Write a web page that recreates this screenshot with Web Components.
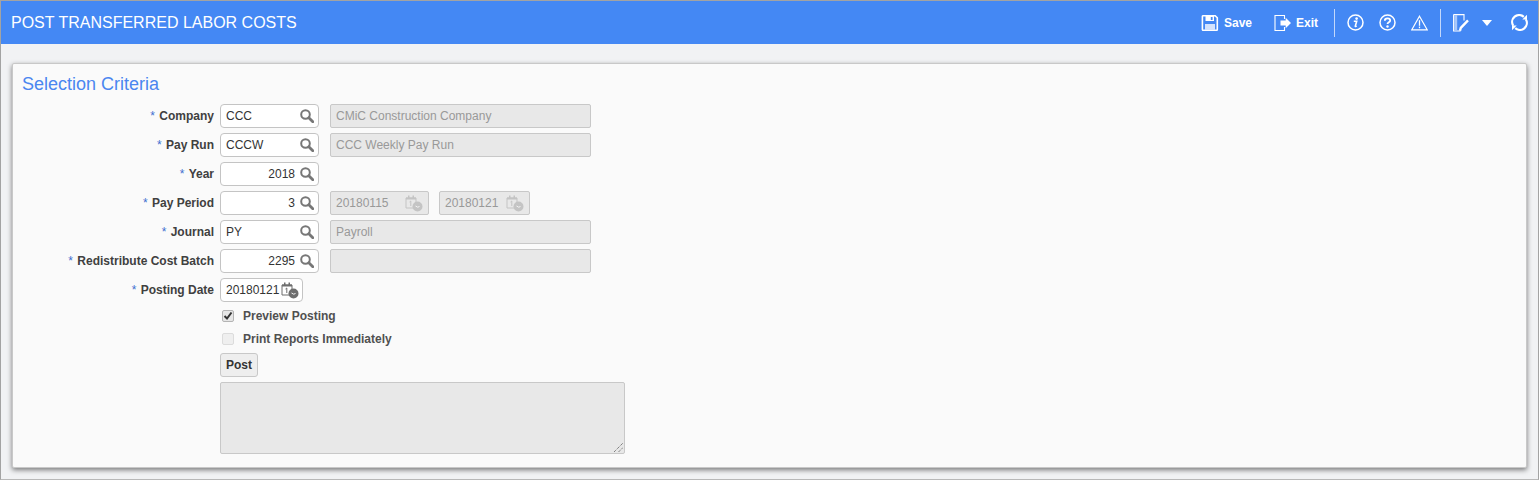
<!DOCTYPE html>
<html>
<head>
<meta charset="utf-8">
<title>Post Transferred Labor Costs</title>
<style>
  html, body { margin: 0; height: 100%; }
  body { font-family: "Liberation Sans", Arial, sans-serif; overflow: hidden; }
</style>
</head>
<body>
<app-shell>
  <title-bar slot="bar" heading="POST TRANSFERRED LABOR COSTS"></title-bar>
  <form-panel heading="Selection Criteria">
    <form-row label="Company" required>
      <lov-input value="CCC"></lov-input>
      <text-box value="CMiC Construction Company" disabled></text-box>
    </form-row>
    <form-row label="Pay Run" required>
      <lov-input value="CCCW"></lov-input>
      <text-box value="CCC Weekly Pay Run" disabled></text-box>
    </form-row>
    <form-row label="Year" required>
      <lov-input value="2018" numeric></lov-input>
    </form-row>
    <form-row label="Pay Period" required>
      <lov-input value="3" numeric></lov-input>
      <date-box value="20180115" width="99" disabled></date-box>
      <date-box value="20180121" width="91" disabled style="margin-left:-1px"></date-box>
    </form-row>
    <form-row label="Journal" required>
      <lov-input value="PY"></lov-input>
      <text-box value="Payroll" disabled></text-box>
    </form-row>
    <form-row label="Redistribute Cost Batch" required>
      <lov-input value="2295" numeric></lov-input>
      <text-box value="" disabled></text-box>
    </form-row>
    <form-row label="Posting Date" required>
      <date-box value="20180121" width="83"></date-box>
    </form-row>
    <check-row label="Preview Posting" checked style="margin-top:-3px"></check-row>
    <check-row label="Print Reports Immediately" disabled></check-row>
    <post-button style="margin-top:3px">Post</post-button>
    <log-area style="margin-top:5px"></log-area>
  </form-panel>
</app-shell>

<script>
const ICONS = {
  save: `<svg width="18" height="18" viewBox="0 0 18 18"><path d="M2.200 1.700h12l2.100 2.100v11.700a.8.8 0 0 1-.8.8H2.200a.8.8 0 0 1-.8-.8V2.500a.8.8 0 0 1 .8-.8z" fill="none" stroke="#fff" stroke-width="1.600"/><path d="M4.500 2h8.500v5H4.500z" fill="#fff"/><path d="M9.800 3h1.800v3H9.800z" fill="#4488f4"/><path d="M4 10h10v6H4z" fill="#d4e3fd"/></svg>`,
  exit: `<svg width="18" height="18" viewBox="0 0 18 18"><path d="M10.500 5V1.500h-9.500v15h9.500V13" fill="none" stroke="#fff" stroke-width="1.100"/><path d="M6.500 6.500h5.200V3.800L17 9l-5.300 5.200v-2.700H6.500z" fill="#fff"/></svg>`,
  info: `<svg width="17" height="17" viewBox="0 0 17 17"><circle cx="8.500" cy="8.500" r="7.500" fill="none" stroke="#fff" stroke-width="1.500"/><circle cx="9.600" cy="4.600" r="1.300" fill="#fff"/><path d="M6.800 7.300h2.900l-1.400 4.800c-.1.600.5.500 1.400 0" fill="none" stroke="#fff" stroke-width="1.600"/></svg>`,
  help: `<svg width="17" height="17" viewBox="0 0 17 17"><circle cx="8.500" cy="8.500" r="7.500" fill="none" stroke="#fff" stroke-width="1.500"/><path d="M5.800 6.700c0-1.600 1.200-2.400 2.700-2.400s2.700.8 2.700 2.200c0 1.900-2.700 1.800-2.700 3.600" fill="none" stroke="#fff" stroke-width="1.800"/><circle cx="8.500" cy="12.500" r="1.200" fill="#fff"/></svg>`,
  warn: `<svg width="17" height="16" viewBox="0 0 17 16"><path d="M8.500 1.200 16.200 14.800H.8z" fill="none" stroke="#fff" stroke-width="1.200"/><path d="M8.500 5.200v5.600" stroke="#fff" stroke-width="1.300"/><path d="M8.500 11.600v1.600" stroke="#fff" stroke-width="1.300"/></svg>`,
  note: `<svg width="17" height="18" viewBox="0 0 17 18"><path d="M.6 .6h10.400v6M.6 .6v16.400h7" fill="none" stroke="#fff" stroke-width="1.100"/><path d="M1.200 1.200h3v15.200h-3z" fill="#a9c8fa"/><path d="M7 16.800l.8-3 7.200-7.400" fill="none" stroke="#fff" stroke-width="2.400"/></svg>`,
  caret: `<svg width="10" height="6" viewBox="0 0 10 6"><path d="M0 0h10L5 6z" fill="#fff"/></svg>`,
  refresh: `<svg width="17" height="17" viewBox="0 0 17 17"><path d="M12.800 2.800A7 7 0 0 0 2.200 11.700" fill="none" stroke="#fff" stroke-width="2.200"/><path d="M4.200 14.200A7 7 0 0 0 14.800 5.300" fill="none" stroke="#fff" stroke-width="2.200"/><path d="M16 .8v4.700h-4.700z" fill="#fff"/><path d="M1 16.200v-4.700h4.700z" fill="#fff"/></svg>`,
  search: `<svg width="14" height="14" viewBox="0 0 14 14"><circle cx="5.500" cy="5.500" r="4.300" fill="none" stroke="#777" stroke-width="2"/><path d="M8.800 8.800l4 4" stroke="#777" stroke-width="2.800" stroke-linecap="round"/></svg>`
};

function calendarIcon(color) {
  return `<svg width="18" height="17" viewBox="0 0 18 17">
    <path d="M1 3h10v10H1z" fill="none" stroke="${color}" stroke-width="1"/>
    <path d="M1 2.500h10v2H1z" fill="${color}"/>
    <path d="M3 .5h1.500v3H3zM7.500 .5H9v3H7.500z" fill="${color}"/>
    <path d="M4.500 7l1.300-1v5" fill="none" stroke="${color}" stroke-width="1"/>
    <circle cx="12.500" cy="11.500" r="5" fill="${color}"/>
    <path d="M10.500 11l2.200 1.200 1.800-.7" fill="none" stroke="#f4f4f4" stroke-width="1"/>
  </svg>`;
}

class AppShell extends HTMLElement {
  connectedCallback() {
    this.attachShadow({ mode: "open" }).innerHTML = `
      <style>
        :host {
          display: flex;
          flex-direction: column;
          box-sizing: border-box;
          height: 480px;
          border: 1px solid #a3a3a3;
          border-bottom-color: #b8b8b8;
          background: #f1f2f4;
        }
        main { padding: 19px 11px 0 11px; }
      </style>
      <slot name="bar"></slot>
      <main><slot></slot></main>
    `;
  }
}

class TitleBar extends HTMLElement {
  connectedCallback() {
    this.attachShadow({ mode: "open" }).innerHTML = `
      <style>
        :host {
          display: flex;
          align-items: center;
          height: 43px;
          background: #4488f4;
          color: #fff;
          padding: 0 10px 0 10px;
        }
        h1 { margin: 0; flex: 1; font-size: 16px; font-weight: normal; }
        .tool { display: flex; align-items: center; gap: 5px; font-size: 12px; font-weight: bold; }
        .tool svg, .icon svg { display: block; }
        .sep { width: 1px; height: 28px; background: #c3d8fb; }
        .icon { display: block; }
      </style>
      <h1>${this.getAttribute("heading")}</h1>
      <div class="tool">${ICONS.save}<span>Save</span></div>
      <div class="tool" style="margin-left:22px;gap:4px">${ICONS.exit}<span>Exit</span></div>
      <div class="sep" style="margin-left:16px"></div>
      <div class="icon" style="margin-left:12px">${ICONS.info}</div>
      <div class="icon" style="margin-left:15px">${ICONS.help}</div>
      <div class="icon" style="margin-left:15px">${ICONS.warn}</div>
      <div class="sep" style="margin-left:12px"></div>
      <div class="icon" style="margin-left:12px">${ICONS.note}</div>
      <div class="icon" style="margin-left:12px">${ICONS.caret}</div>
      <div class="icon" style="margin-left:19px">${ICONS.refresh}</div>
    `;
  }
}

class FormPanel extends HTMLElement {
  connectedCallback() {
    this.attachShadow({ mode: "open" }).innerHTML = `
      <style>
        :host {
          display: block;
          box-sizing: border-box;
          height: 405px;
          background: #fafafa;
          border: 1px solid #c8c8c8;
          border-radius: 2px;
          box-shadow: 0 2px 5px rgba(0, 0, 0, .5);
          padding: 10px 9px 0 9px;
        }
        h2 {
          margin: 0 0 10px 0;
          font-size: 18px;
          line-height: 20px;
          font-weight: normal;
          color: #4a86f0;
        }
        .body { display: flex; flex-direction: column; align-items: flex-start; }
      </style>
      <h2>${this.getAttribute("heading")}</h2>
      <div class="body"><slot></slot></div>
    `;
  }
}

class FormRow extends HTMLElement {
  connectedCallback() {
    this.attachShadow({ mode: "open" }).innerHTML = `
      <style>
        :host { display: flex; align-items: center; height: 24px; margin-bottom: 5px; }
        label {
          width: 192px;
          margin-right: 6px;
          text-align: right;
          font-size: 12px;
          font-weight: bold;
          color: #404040;
          white-space: nowrap;
        }
        i { font-style: normal; font-weight: normal; color: #3f6fd0; margin-right: 1px; }
        .fields { display: flex; gap: 11px; }
      </style>
      <label><i>* </i>${this.getAttribute("label")}</label>
      <div class="fields"><slot></slot></div>
    `;
  }
}

class LovInput extends HTMLElement {
  connectedCallback() {
    this.attachShadow({ mode: "open" }).innerHTML = `
      <style>
        :host {
          display: flex;
          align-items: center;
          box-sizing: border-box;
          width: 99px;
          height: 24px;
          background: #fff;
          border: 1px solid #c4c4c4;
          border-radius: 4px;
          font-size: 12px;
          color: #333;
          padding: 0 4px 0 5px;
        }
        span { flex: 1; text-align: ${this.hasAttribute("numeric") ? "right" : "left"}; margin-right: 5px; }
        svg { display: block; }
      </style>
      <span>${this.getAttribute("value")}</span>${ICONS.search}
    `;
  }
}

class TextBox extends HTMLElement {
  connectedCallback() {
    this.attachShadow({ mode: "open" }).innerHTML = `
      <style>
        :host {
          display: flex;
          align-items: center;
          box-sizing: border-box;
          width: 261px;
          height: 24px;
          background: #e8e8e8;
          border: 1px solid #c8c8c8;
          border-radius: 2px;
          font-size: 12px;
          color: #999;
          padding: 0 5px;
        }
      </style>
      <span>${this.getAttribute("value")}</span>
    `;
  }
}

class DateBox extends HTMLElement {
  connectedCallback() {
    const off = this.hasAttribute("disabled");
    this.attachShadow({ mode: "open" }).innerHTML = `
      <style>
        :host {
          display: flex;
          align-items: center;
          box-sizing: border-box;
          width: ${this.getAttribute("width")}px;
          height: 24px;
          background: ${off ? "#e8e8e8" : "#fff"};
          border: 1px solid ${off ? "#c8c8c8" : "#c4c4c4"};
          border-radius: ${off ? 2 : 4}px;
          font-size: 12px;
          color: ${off ? "#999" : "#333"};
          padding: 0 ${off ? "5px" : "3px"} 0 5px;
        }
        span { flex: 1; }
        svg { display: block; }
      </style>
      <span>${this.getAttribute("value")}</span>${calendarIcon(off ? "#c4c4c4" : "#6e6e6e")}
    `;
  }
}

class CheckRow extends HTMLElement {
  connectedCallback() {
    const checked = this.hasAttribute("checked");
    const off = this.hasAttribute("disabled");
    this.attachShadow({ mode: "open" }).innerHTML = `
      <style>
        :host { display: flex; align-items: center; height: 23px; margin-left: 200px; }
        .box {
          box-sizing: border-box;
          width: 12px;
          height: 12px;
          border: 1px solid ${off ? "#dcdcdc" : "#b4b4b4"};
          border-radius: 2px;
          background: ${off ? "#efefef" : "#e6e6e6"};
          margin-right: 9px;
        }
        .box svg { display: block; }
        label { font-size: 12px; font-weight: bold; color: #505050; white-space: nowrap; }
      </style>
      <div class="box">${checked ? `<svg width="10" height="10" viewBox="0 0 10 10"><path d="M1.500 5l2.500 2.500L8.500 1.500" fill="none" stroke="#333" stroke-width="2"/></svg>` : ""}</div>
      <label>${this.getAttribute("label")}</label>
    `;
  }
}

class PostButton extends HTMLElement {
  connectedCallback() {
    this.attachShadow({ mode: "open" }).innerHTML = `
      <style>
        :host {
          display: flex;
          align-items: center;
          justify-content: center;
          box-sizing: border-box;
          width: 38px;
          height: 24px;
          margin-left: 198px;
          background: #eeeeee;
          border: 1px solid #c8c8c8;
          border-radius: 3px;
          font-size: 12px;
          font-weight: bold;
          color: #333;
        }
      </style>
      <slot></slot>
    `;
  }
}

class LogArea extends HTMLElement {
  connectedCallback() {
    this.attachShadow({ mode: "open" }).innerHTML = `
      <style>
        :host {
          display: block;
          position: relative;
          box-sizing: border-box;
          width: 405px;
          height: 72px;
          margin-left: 198px;
          background: #e8e8e8;
          border: 1px solid #c8c8c8;
          border-radius: 2px;
        }
        svg { position: absolute; right: 1px; bottom: 1px; display: block; }
      </style>
      <svg width="9" height="9" viewBox="0 0 9 9"><path d="M0 9L9 0M4.500 9L9 4.500" stroke="#555" stroke-width="1" stroke-dasharray="1 1"/></svg>
    `;
  }
}

customElements.define("app-shell", AppShell);
customElements.define("title-bar", TitleBar);
customElements.define("form-panel", FormPanel);
customElements.define("form-row", FormRow);
customElements.define("lov-input", LovInput);
customElements.define("text-box", TextBox);
customElements.define("date-box", DateBox);
customElements.define("check-row", CheckRow);
customElements.define("post-button", PostButton);
customElements.define("log-area", LogArea);
</script>
</body>
</html>
